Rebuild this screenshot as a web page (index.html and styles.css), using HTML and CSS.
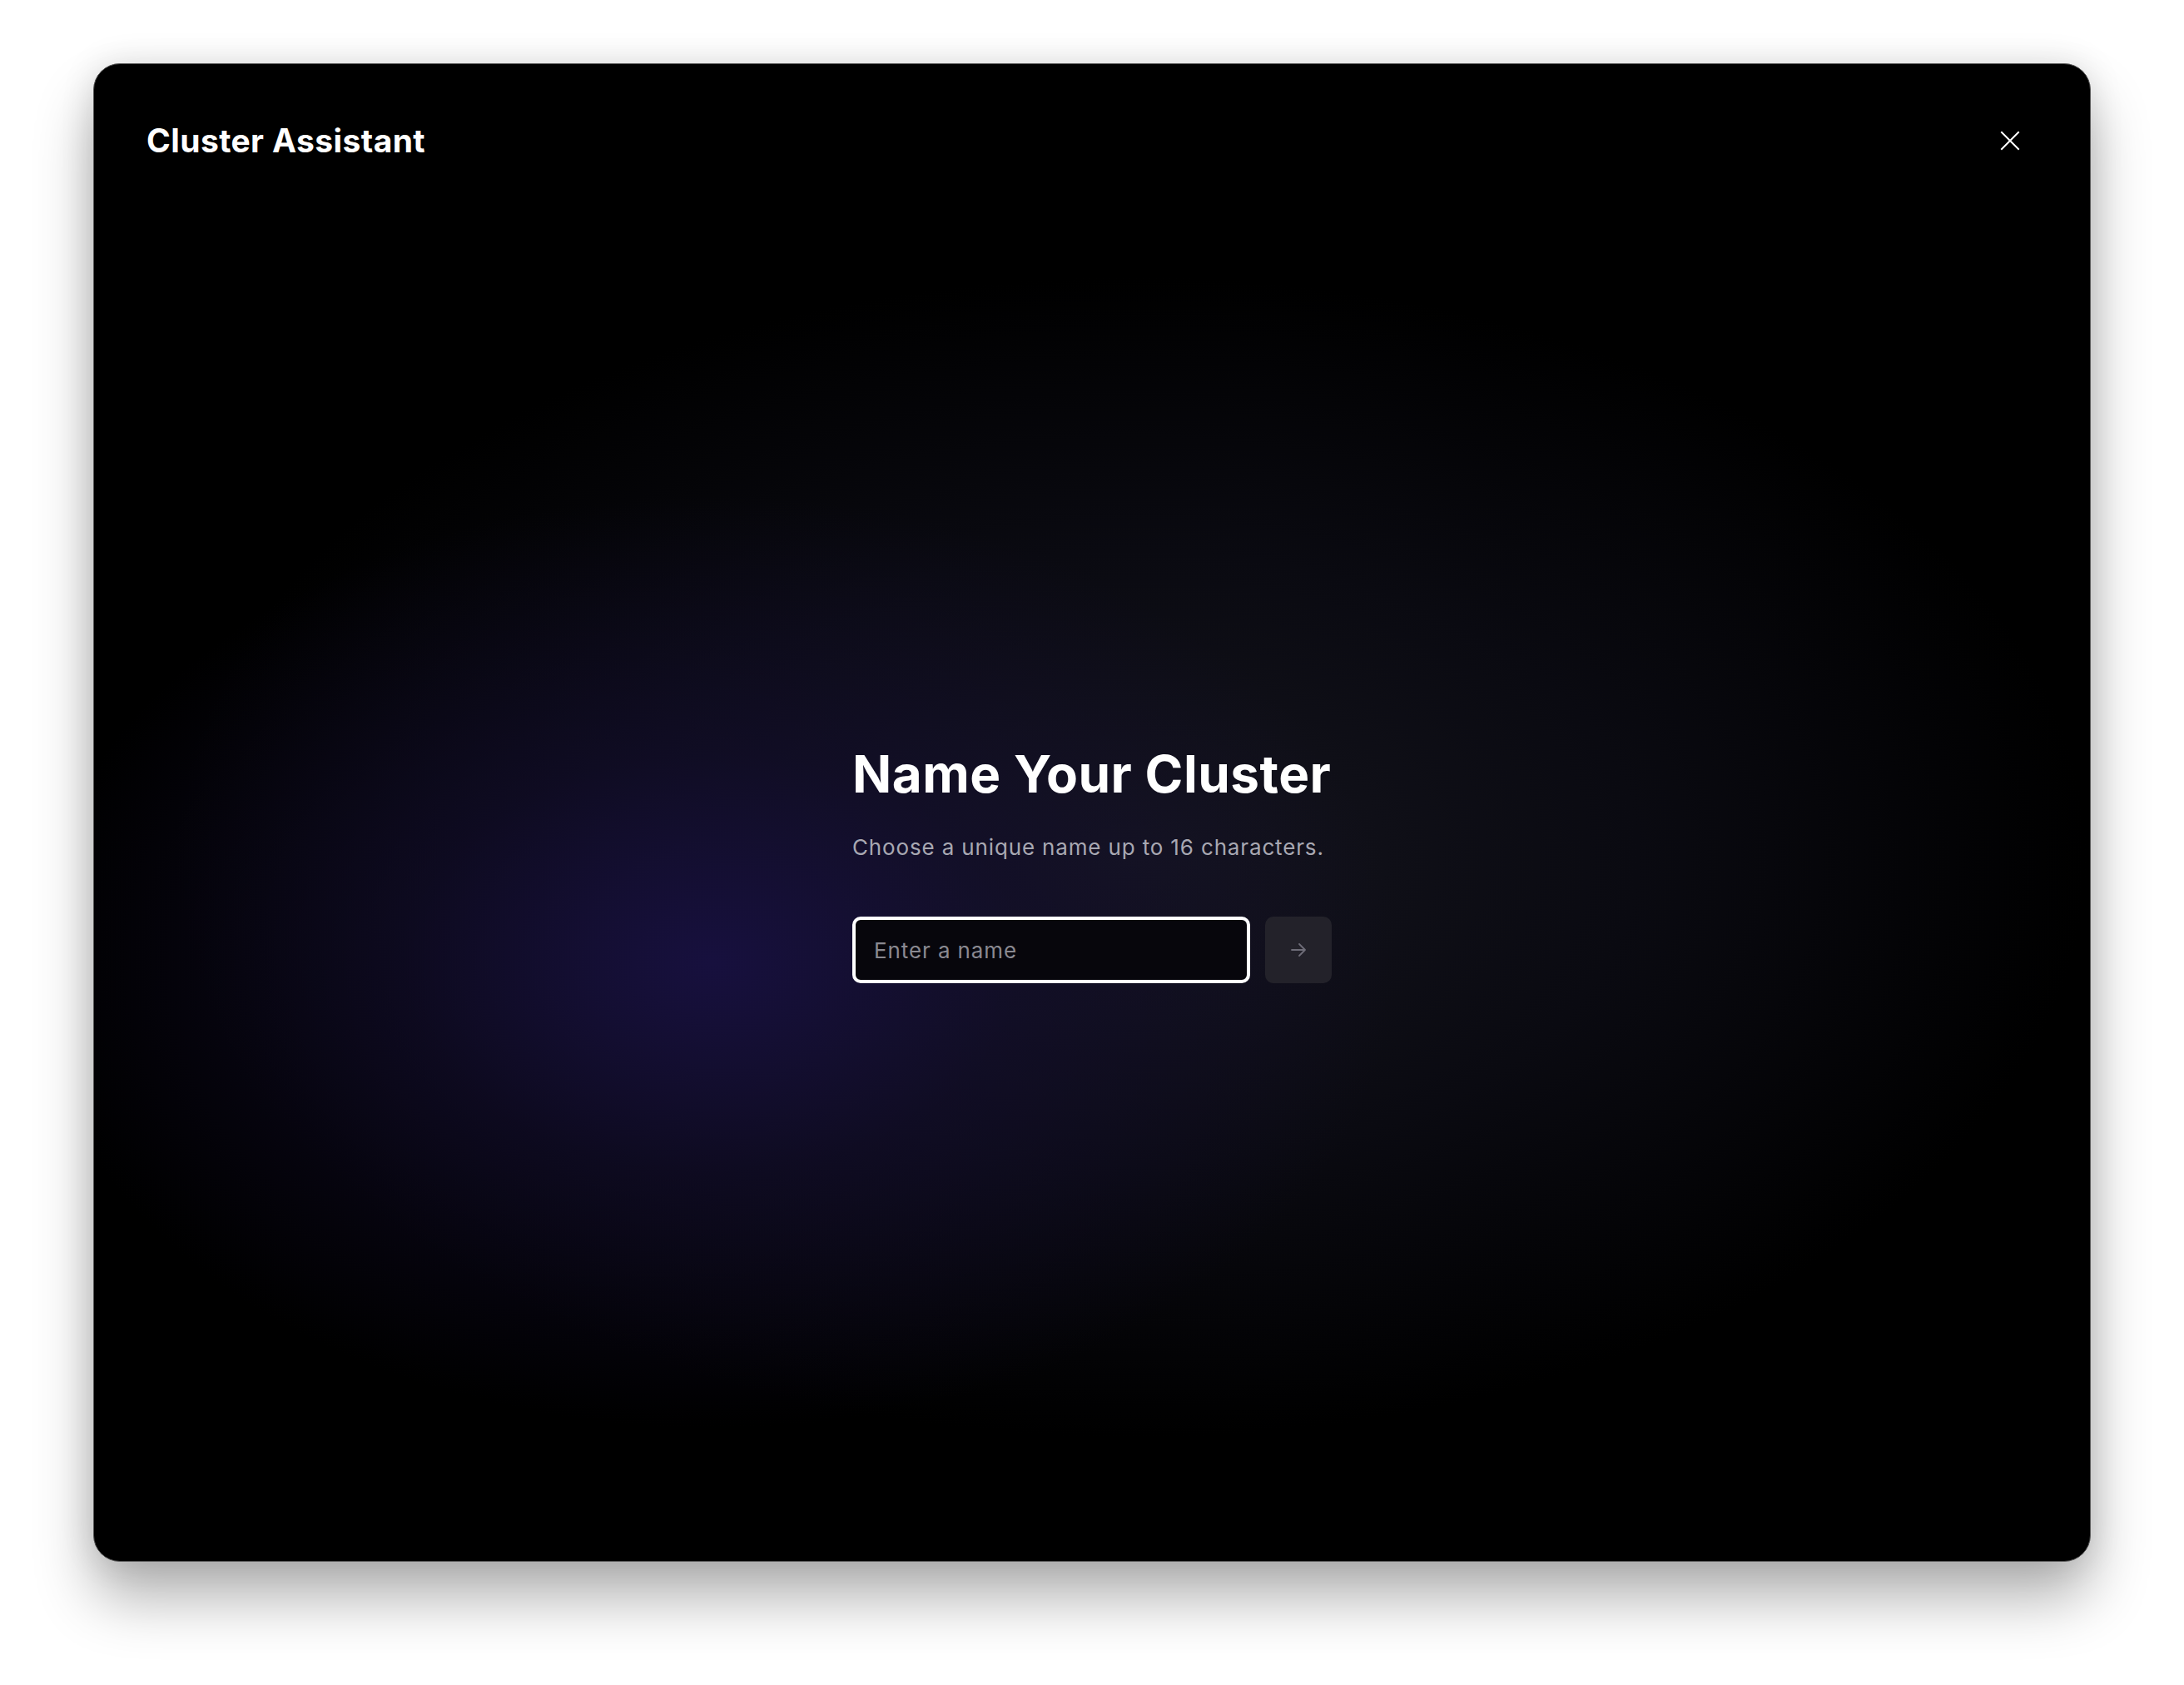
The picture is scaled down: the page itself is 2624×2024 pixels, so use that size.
FILE: index.html
```html
<!DOCTYPE html>
<html lang="en">
<head>
    <meta charset="UTF-8">
    <meta name="viewport" content="width=device-width, initial-scale=1.0">
    <title>Cluster Assistant</title>
    <link rel="stylesheet" href="styles.css">
</head>
<body>
    <div class="assistant-window">
        <div class="header">
            <div class="title">Cluster Assistant</div>
            <button class="close-button" aria-label="Close">
                <svg width="24" height="24" viewBox="0 0 24 24" fill="none" stroke="#ffffff" stroke-width="2" stroke-linecap="square">
                    <path d="M2 2L22 22M22 2L2 22"/>
                </svg>
            </button>
        </div>
        <div class="stage">
            <div class="name-form">
                <h1>Name Your Cluster</h1>
                <p class="hint">Choose a unique name up to 16 characters.</p>
                <div class="input-row">
                    <input type="text" placeholder="Enter a name" maxlength="16">
                    <button class="next-button" aria-label="Next">
                        <svg width="20" height="20" viewBox="0 0 20 20" fill="none" stroke="#6e6d78" stroke-width="1.8" stroke-linecap="round" stroke-linejoin="round">
                            <path d="M2 10H18M11 3L18 10L11 17"/>
                        </svg>
                    </button>
                </div>
            </div>
        </div>
    </div>
</body>
</html>
```

FILE: styles.css
```css
body {
    margin: 0;
    padding: 76px 112px 148px;
    font-family: Inter, "Noto Sans", sans-serif;
    background-color: #ffffff;
    height: 100vh;
    box-sizing: border-box;
    display: flex;
}
.assistant-window {
    flex: 1;
    display: flex;
    flex-direction: column;
    border-radius: 32px;
    border: 1px solid #5a5a5a;
    overflow: hidden;
    box-shadow: 0 44px 70px rgba(0, 0, 0, 0.3), 0 0 40px rgba(0, 0, 0, 0.12);
    background:
        radial-gradient(ellipse 820px 560px at 31% 60%, rgba(23, 16, 62, 1) 0%, rgba(20, 14, 50, 0.55) 45%, rgba(0, 0, 0, 0) 100%),
        radial-gradient(ellipse 1350px 820px at 52% 53%, #14141d 0%, #0a0a11 45%, #000000 85%);
    background-color: #000;
}
.header {
    height: 184px;
    padding: 0 84px 0 63px;
    display: flex;
    align-items: center;
    justify-content: space-between;
    flex-shrink: 0;
}
.title {
    color: #ffffff;
    font-size: 39px;
    font-weight: 700;
    line-height: 1.2;
    letter-spacing: 0.4px;
}
.close-button {
    background: none;
    border: none;
    padding: 0;
    display: flex;
    cursor: pointer;
}
.stage {
    flex: 1;
    display: flex;
    align-items: center;
    justify-content: center;
    padding-bottom: 62px;
}
.name-form {
    width: 576px;
}
.name-form h1 {
    margin: 0;
    color: #ffffff;
    font-size: 62px;
    font-weight: 700;
    line-height: 1.2;
    letter-spacing: 0.5px;
    white-space: nowrap;
}
.hint {
    margin: 33px 0 0;
    color: #a8a8b2;
    font-size: 26px;
    line-height: 1.4;
    letter-spacing: 0.85px;
    white-space: nowrap;
}
.input-row {
    margin-top: 65px;
    display: flex;
    gap: 18px;
}
.input-row input {
    flex: 1;
    min-width: 0;
    height: 80px;
    box-sizing: border-box;
    padding: 0 22px;
    border: 4px solid #ffffff;
    border-radius: 10px;
    background-color: #07060c;
    color: #ffffff;
    font-family: inherit;
    font-size: 26px;
    letter-spacing: 0.9px;
    outline: none;
}
.input-row input::placeholder {
    color: #8a8991;
}
.next-button {
    width: 80px;
    height: 80px;
    border: none;
    border-radius: 10px;
    background-color: #23222a;
    display: flex;
    align-items: center;
    justify-content: center;
    cursor: pointer;
}
```
